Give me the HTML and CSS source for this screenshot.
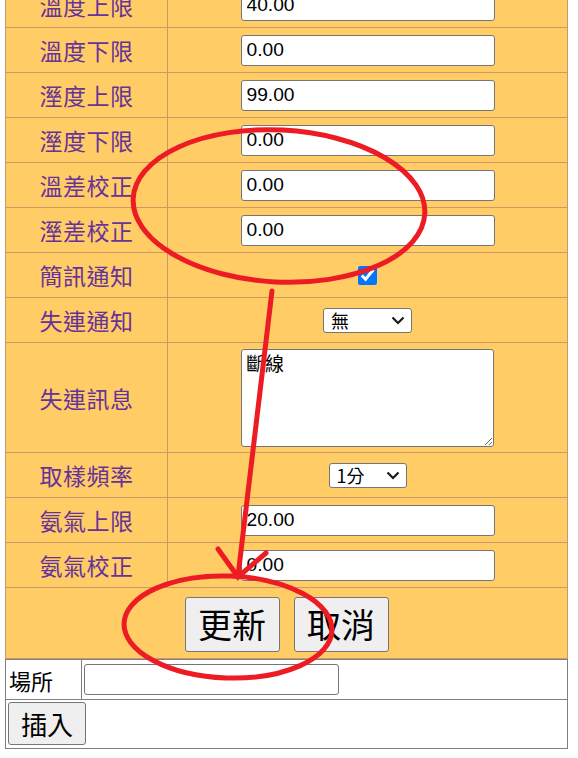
FILE: index.html
```html
<!DOCTYPE html>
<html lang="zh-Hant">
<head>
<meta charset="utf-8">
<title>設定</title>
<link rel="stylesheet" href="styles.css">
</head>
<body>
<div class="page">
  <table class="settings">
    <tr><td class="label">溫度上限</td><td class="field"><input class="num" type="text" value="40.00"></td></tr>
    <tr><td class="label">溫度下限</td><td class="field"><input class="num" type="text" value="0.00"></td></tr>
    <tr><td class="label">溼度上限</td><td class="field"><input class="num" type="text" value="99.00"></td></tr>
    <tr><td class="label">溼度下限</td><td class="field"><input class="num" type="text" value="0.00"></td></tr>
    <tr><td class="label">溫差校正</td><td class="field"><input class="num" type="text" value="0.00"></td></tr>
    <tr><td class="label">溼差校正</td><td class="field"><input class="num" type="text" value="0.00"></td></tr>
    <tr><td class="label">簡訊通知</td><td class="field"><input class="check" type="checkbox" checked></td></tr>
    <tr><td class="label">失連通知</td><td class="field"><span class="sel-wrap"><select class="sel sel-wide"><option>無</option></select><svg class="chev" width="14" height="9" viewBox="0 0 14 9"><path d="M1.5 1.5 L7 7 L12.5 1.5" fill="none" stroke="#1a1a1a" stroke-width="2.2"/></svg></span></td></tr>
    <tr class="tall"><td class="label">失連訊息</td><td class="field"><textarea class="msg">斷線</textarea></td></tr>
    <tr><td class="label">取樣頻率</td><td class="field"><span class="sel-wrap"><select class="sel sel-narrow"><option>1分</option></select><svg class="chev" width="14" height="9" viewBox="0 0 14 9"><path d="M1.5 1.5 L7 7 L12.5 1.5" fill="none" stroke="#1a1a1a" stroke-width="2.2"/></svg></span></td></tr>
    <tr><td class="label">氨氣上限</td><td class="field"><input class="num" type="text" value="20.00"></td></tr>
    <tr><td class="label">氨氣校正</td><td class="field"><input class="num" type="text" value="0.00"></td></tr>
    <tr class="actions"><td colspan="2"><div class="btn-row"><button class="big-btn">更新</button><button class="big-btn">取消</button></div></td></tr>
  </table>
  <table class="insert">
    <tr><td class="place-label">場所</td><td class="place-field"><input class="place-input" type="text"></td></tr>
    <tr><td colspan="2" class="insert-cell"><button class="insert-btn">插入</button></td></tr>
  </table>
</div>
<svg class="marks" width="578" height="758" viewBox="0 0 578 758">
  <g fill="none" stroke="#ED1C24" stroke-width="5" stroke-linecap="round">
    <ellipse cx="279" cy="206" rx="146" ry="76" transform="rotate(3 279 206)"/>
    <path d="M272 291 Q256 430 238 576"/>
    <path d="M218 549 L238 577 L266 553"/>
    <ellipse cx="228" cy="627" rx="104" ry="51" transform="rotate(2 228 627)"/>
  </g>
</svg>
</body>
</html>
```
FILE: styles.css
```css
html, body {
  margin: 0;
  padding: 0;
  background: #ffffff;
}

.page {
  margin-top: -18px;
  padding-left: 5px;
}

.settings {
  border-collapse: collapse;
  background: #FFCC66;
  border: 1px solid #CC9966;
  width: 563px;
}

.settings td {
  border: 1px solid #CC9966;
  padding: 0;
  height: 44px;
  text-align: center;
  vertical-align: middle;
}

.settings td.label {
  width: 161px;
  color: #663399;
  font-family: "Noto Sans CJK TC", "Noto Sans CJK SC", sans-serif;
  font-size: 23px;
  letter-spacing: 0.5px;
}

.settings tr.tall td {
  height: 109px;
}

.settings tr.actions td {
  height: 70px;
}

.num {
  box-sizing: border-box;
  width: 254px;
  height: 31px;
  margin: 0;
  padding: 1px 5px;
  border: 1px solid #767676;
  border-radius: 3px;
  background: #ffffff;
  font-family: "Liberation Sans", Arial, sans-serif;
  font-size: 19.2px;
  color: #000000;
  vertical-align: middle;
}

.check {
  width: 19px;
  height: 19px;
  margin: 0;
  vertical-align: middle;
  accent-color: #0075FF;
}

.sel-wrap {
  position: relative;
  display: inline-block;
  vertical-align: middle;
  line-height: 0;
}

.sel {
  appearance: none;
  -webkit-appearance: none;
  box-sizing: border-box;
  height: 25px;
  margin: 0;
  padding: 0 2px 0 7px;
  border: 1px solid #767676;
  border-radius: 3px;
  background: #ffffff;
  font-family: "Noto Sans CJK TC", sans-serif;
  font-size: 18px;
  line-height: 23px;
  color: #000000;
}

.sel-wide { width: 89px; }
.sel-narrow { width: 78px; }

.chev {
  position: absolute;
  right: 7px;
  top: 8px;
  pointer-events: none;
}

.msg {
  display: block;
  box-sizing: border-box;
  width: 253px;
  height: 98px;
  margin: 1px 0 0 73px;
  padding: 1px 4px;
  border: 1px solid #767676;
  border-radius: 3px;
  background: #ffffff;
  font-family: "Noto Sans CJK TC", sans-serif;
  font-size: 19px;
  line-height: 1.3;
  color: #000000;
  resize: both;
}

.btn-row {
  display: flex;
  justify-content: center;
  gap: 14px;
  padding-top: 2px;
}

.big-btn {
  box-sizing: border-box;
  width: 95px;
  height: 55px;
  margin: 0;
  padding: 0;
  border: 1px solid #767676;
  border-radius: 3px;
  background: #EFEFEF;
  font-family: "Noto Sans CJK TC", sans-serif;
  font-size: 34px;
  line-height: 1;
  color: #000000;
}

.insert {
  border-collapse: collapse;
  width: 563px;
  border: 1px solid #808080;
  background: #ffffff;
}

.insert td {
  border: 1px solid #808080;
  padding: 0;
}

.place-label {
  width: 72px;
  height: 39px;
  padding-left: 3px !important;
  font-family: "Noto Sans CJK TC", sans-serif;
  font-size: 22px;
  color: #000000;
}

.place-field {
  padding-left: 2px !important;
}

.place-input {
  display: block;
  box-sizing: border-box;
  width: 255px;
  height: 31px;
  margin: 0;
  border: 1px solid #767676;
  border-radius: 3px;
  background: #ffffff;
}

.insert-cell {
  height: 44px;
  padding: 2px !important;
  vertical-align: top;
}

.insert-btn {
  display: block;
  box-sizing: border-box;
  width: 78px;
  height: 43px;
  margin: 0;
  padding: 0;
  border: 1px solid #767676;
  border-radius: 3px;
  background: #EFEFEF;
  font-family: "Noto Sans CJK TC", sans-serif;
  font-size: 26px;
  line-height: 1;
  color: #000000;
}

.marks {
  position: absolute;
  top: 0;
  left: 0;
  pointer-events: none;
}
```
